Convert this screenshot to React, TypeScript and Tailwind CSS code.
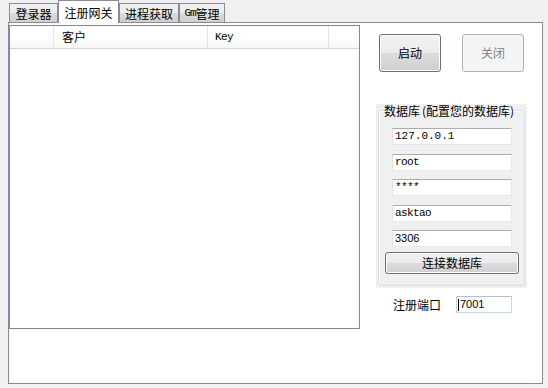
const cjk = "font-['Noto_Sans_CJK_SC','Noto_Sans',sans-serif]";
const mono = "font-['Liberation_Mono',monospace] text-[11px] tracking-[-0.6px]";

function Tab({ label, selected, width }: { label: React.ReactNode; selected?: boolean; width: number }) {
  if (selected) {
    return (
      <div
        className="relative z-10 -mb-px flex h-[23px] items-center justify-center border-x border-t border-[#898c95] bg-white text-[12px] leading-[13px] text-black"
        style={{ width }}
      >
        {label}
      </div>
    );
  }
  return (
    <div
      className="flex h-[19px] items-center justify-center border border-b-0 border-[#898c95] bg-[linear-gradient(#f2f2f2,#ebebeb_50%,#dddddd_50%,#cfcfcf)] pt-px text-[12px] leading-[13px] text-black"
      style={{ width }}
    >
      {label}
    </div>
  );
}

function Field({ children, className = "" }: { children: React.ReactNode; className?: string }) {
  return (
    <div
      className={`ml-[13px] flex h-[17px] w-[120px] items-center border border-[#e3e9ef] border-l-[#e2e3ea] border-t-[#abadb3] bg-white pl-[2px] ${className}`}
    >
      {children}
    </div>
  );
}

export default function App() {
  return (
    <div className={`h-[388px] w-[548px] overflow-hidden bg-[#f0f0f0] ${cjk} text-black`}>
      {/* tabs */}
      <div className="flex h-[22px] items-end pl-[9px]">
        <Tab label="登录器" width={49} />
        <Tab label="注册网关" width={61} selected />
        <Tab label="进程获取" width={60} />
        <Tab
          width={46}
          label={
            <span className="flex items-center">
              <span className="font-['Liberation_Mono',monospace] text-[11px] tracking-[-1px]">Gm</span>
              <span>管理</span>
            </span>
          }
        />
      </div>

      {/* panel */}
      <div className="ml-[8px] flex h-[362px] w-[535px] border border-[#898c95] bg-white">
        {/* list view */}
        <div className="mt-[2px] flex h-[304px] w-[351px] flex-col border border-[#828790] bg-white">
          <div className="flex h-[23px] border-b border-[#d5d5d5] bg-[linear-gradient(#ffffff,#ffffff_50%,#f5f6f7)] text-[12px]">
            <div className="w-[44px] border-r border-[#e3e4e6]" />
            <div className="flex w-[154px] items-center border-r border-[#e3e4e6] pl-[8px]">客户</div>
            <div className={`flex w-[121px] items-center border-r border-[#e3e4e6] pl-[7px] ${mono}`}>Key</div>
            <div className="flex-1" />
          </div>
        </div>

        {/* right column */}
        <div className="flex flex-1 flex-col">
          <div className="mt-[11px] flex gap-[21px] pl-[19px]">
            <div className="flex h-[38px] w-[62px] items-center justify-center rounded-[3px] border border-[#707070] bg-[linear-gradient(#f2f2f2,#ebebeb_50%,#dddddd_50%,#cfcfcf)] text-[12px] shadow-[inset_0_0_0_1px_#fcfcfc]">
              启动
            </div>
            <div className="flex h-[38px] w-[62px] items-center justify-center rounded-[3px] border border-[#adb2b5] bg-[#f4f4f4] text-[12px] text-[#838383]">
              关闭
            </div>
          </div>

          {/* group box */}
          <div className="ml-[16px] mt-[32px] h-[184px] w-[151px] bg-[#f0f0f0] px-[2px] pb-[2px]">
            <fieldset className="h-full rounded-[3px] border border-[#d5dfe5] shadow-[inset_1px_1px_0_#ffffff]">
              <legend className="ml-[5px] px-0 text-[12px] leading-[13px]">
                数据库<span className="inline-block w-[6px] text-right">(</span>配置您的数据库
                <span className="inline-block w-[6px] text-left">)</span>
              </legend>
              <div className="mt-[11px] flex flex-col">
                <Field className={mono}>
                  <span className="tracking-[0px]">127.0.0.1</span>
                </Field>
                <Field className={`mt-[9px] ${mono}`}>root</Field>
                <Field className={`mt-[8px] ${mono}`}>****</Field>
                <Field className={`mt-[9px] ${mono}`}>asktao</Field>
                <Field className="mt-[8px] font-['Liberation_Sans',sans-serif] text-[11px]">3306</Field>
                <div className="ml-[6px] mt-[5px] flex h-[22px] w-[134px] items-center justify-center rounded-[3px] border border-[#707070] bg-[linear-gradient(#f2f2f2,#ebebeb_50%,#dddddd_50%,#cfcfcf)] text-[12px] shadow-[inset_0_0_0_1px_#fcfcfc]">
                  连接数据库
                </div>
              </div>
            </fieldset>
          </div>

          {/* port row */}
          <div className="mt-[8px] flex items-center pl-[33px]">
            <span className="w-[48px] text-[12px] leading-[17px]">注册端口</span>
            <div className="ml-[15px] flex h-[17px] w-[56px] items-center border border-[#c5d9ea] border-t-[#a9c4dc] bg-white pl-[1px] font-['Liberation_Sans',sans-serif] text-[11px]">
              <span className="mr-[1px] h-[12px] w-px bg-black" />
              7001
            </div>
          </div>
        </div>
      </div>
    </div>
  );
}
